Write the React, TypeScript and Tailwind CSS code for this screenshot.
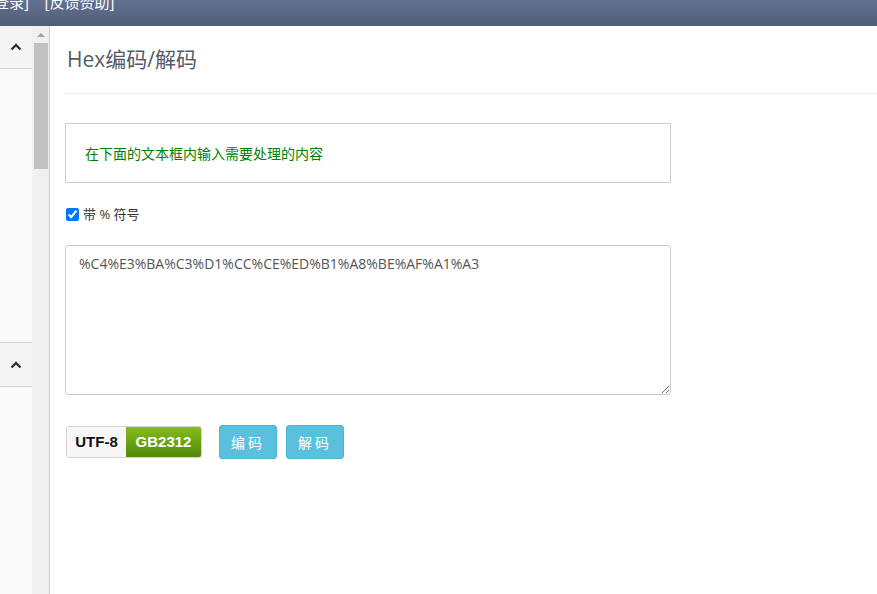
import React from "react";

function Chevron() {
  return (
    <svg width="12" height="8" viewBox="0 0 12 8">
      <path d="M1.5 6.5 L6 2 L10.5 6.5" fill="none" stroke="#333" strokeWidth="2.4" />
    </svg>
  );
}

export default function App() {
  const font = { fontFamily: '"Open Sans","Noto Sans CJK SC",sans-serif' };
  return (
    <div className="w-[877px] h-[594px] overflow-hidden bg-white flex flex-col" style={font}>
      <div className="h-[26px] shrink-0 bg-gradient-to-b from-[#637192] to-[#515c77] overflow-hidden">
        <div className="text-white text-[15px] leading-[20px] mt-[-8px] ml-[-6px] whitespace-pre">登录]    [反馈赞助]</div>
      </div>
      <div className="flex flex-1 min-h-0">
        <div className="w-[32px] shrink-0 bg-[#fafafa] flex flex-col">
          <div className="h-[43px] bg-[#f5f5f5] border-b border-[#d0d0d0] flex items-center justify-center">
            <Chevron />
          </div>
          <div className="h-[273px]" />
          <div className="h-[45px] bg-[#f5f5f5] border-y border-[#d0d0d0] flex items-center justify-center">
            <Chevron />
          </div>
        </div>
        <div className="w-[17px] shrink-0 bg-[#f0f0f0] flex flex-col items-center pt-[6px]">
          <svg width="8" height="5" viewBox="0 0 8 5"><path d="M0 5 L4 1 L8 5 Z" fill="#a3a3a3" /></svg>
          <div className="w-[14px] h-[126px] bg-[#c1c1c1] mt-[6px]" />
        </div>
        <div className="w-px shrink-0 bg-[#cfcfcf]" />
        <div className="flex-1 pl-[15px]">
          <div className="text-[21px] text-[#555a68] pt-[19px] pl-[2px] leading-[28px]">Hex编码/解码</div>
          <div className="h-px bg-[#eee] mt-[20px]" />
          <div className="w-[606px] h-[60px] border border-[#ccc] mt-[29px] flex items-center pl-[19px] text-[14px] text-[#008000]">
            在下面的文本框内输入需要处理的内容
          </div>
          <label className="flex items-center mt-[23px] ml-[1px] text-[13px] text-[#333] leading-[16px]">
            <input type="checkbox" defaultChecked className="w-[13px] h-[13px] m-0 mr-[4px] accent-[#0075ff]" />
            带 % 符号
          </label>
          <textarea
            className="block w-[606px] h-[150px] border border-[#ccc] rounded-[3px] mt-[23px] px-[13px] py-[8px] text-[14px] text-[#555] leading-[20px] outline-none"
            style={font}
            defaultValue="%C4%E3%BA%C3%D1%CC%CE%ED%B1%A8%BE%AF%A1%A3"
          />
          <div className="flex items-center mt-[30px] ml-[1px]">
            <div className="flex h-[32px] rounded-[3px] overflow-hidden border border-[#d5d5d5] text-[15px] font-bold" style={{ fontFamily: '"Liberation Sans",sans-serif' }}>
              <div className="w-[59px] bg-[#f7f7f7] text-[#111] flex items-center justify-center">UTF-8</div>
              <div className="w-[75px] bg-gradient-to-b from-[#86bc1c] to-[#4f8a0b] text-white flex items-center justify-center">GB2312</div>
            </div>
            <button className="ml-[17px] w-[58px] h-[34px] rounded-[3px] bg-[#5bc0de] border border-[#46b8da] text-white text-[14px] tracking-[3px]">编码</button>
            <button className="ml-[9px] w-[58px] h-[34px] rounded-[3px] bg-[#5bc0de] border border-[#46b8da] text-white text-[14px] tracking-[3px]">解码</button>
          </div>
        </div>
      </div>
    </div>
  );
}
